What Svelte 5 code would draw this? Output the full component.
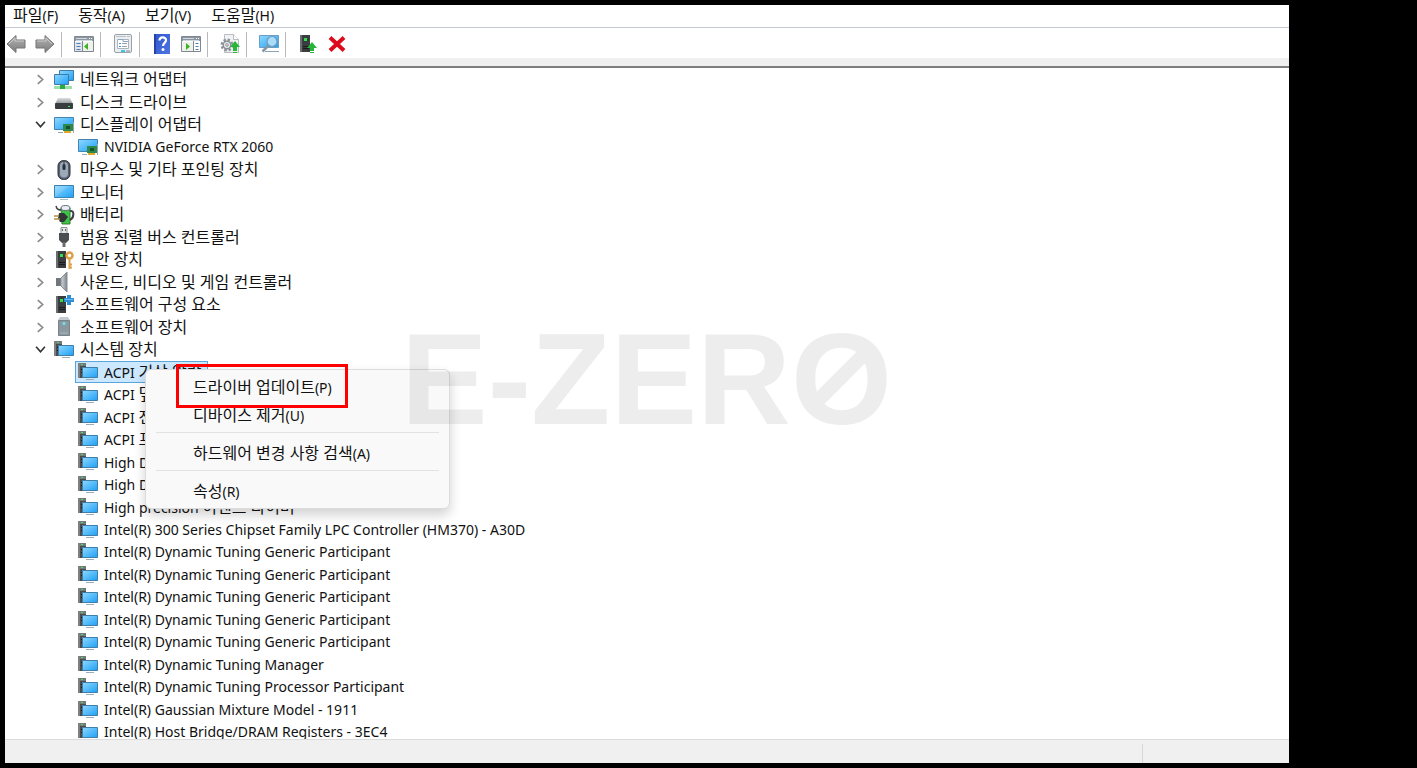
<script>
  let { onCommand = () => {} } = $props();

  const menus = ['파일(F)', '동작(A)', '보기(V)', '도움말(H)'];

  const tools = [
    { icon: 'back', label: '뒤로' },
    { icon: 'forward', label: '앞으로' },
    { sep: true },
    { icon: 'console', label: '콘솔 트리 표시' },
    { sep: true },
    { icon: 'props', label: '속성' },
    { sep: true },
    { icon: 'help', label: '도움말' },
    { icon: 'action', label: '작업 창 표시' },
    { sep: true },
    { icon: 'driver', label: '드라이버 업데이트' },
    { sep: true },
    { icon: 'scan', label: '하드웨어 변경 사항 검색' },
    { sep: true },
    { icon: 'enable', label: '디바이스 추가' },
    { icon: 'remove', label: '디바이스 제거' },
  ];

  let rows = $state([
    { icon: 'network', name: '네트워크 어댑터', open: false },
    { icon: 'disk', name: '디스크 드라이브', open: false },
    { icon: 'display', name: '디스플레이 어댑터', open: true },
    { icon: 'display', name: 'NVIDIA GeForce RTX 2060', child: true },
    { icon: 'mouse', name: '마우스 및 기타 포인팅 장치', open: false },
    { icon: 'monitor', name: '모니터', open: false },
    { icon: 'battery', name: '배터리', open: false },
    { icon: 'usb', name: '범용 직렬 버스 컨트롤러', open: false },
    { icon: 'security', name: '보안 장치', open: false },
    { icon: 'sound', name: '사운드, 비디오 및 게임 컨트롤러', open: false },
    { icon: 'component', name: '소프트웨어 구성 요소', open: false },
    { icon: 'software', name: '소프트웨어 장치', open: false },
    { icon: 'system', name: '시스템 장치', open: true },
    { icon: 'system', name: 'ACPI 기상 알람', child: true },
    { icon: 'system', name: 'ACPI 덮개', child: true },
    { icon: 'system', name: 'ACPI 전원 단추', child: true },
    { icon: 'system', name: 'ACPI 프로세서 수집기', child: true },
    { icon: 'system', name: 'High Definition Audio 컨트롤러', child: true },
    { icon: 'system', name: 'High Definition Audio 컨트롤러', child: true },
    { icon: 'system', name: 'High precision 이벤트 타이머', child: true },
    { icon: 'system', name: 'Intel(R) 300 Series Chipset Family LPC Controller (HM370) - A30D', child: true },
    { icon: 'system', name: 'Intel(R) Dynamic Tuning Generic Participant', child: true },
    { icon: 'system', name: 'Intel(R) Dynamic Tuning Generic Participant', child: true },
    { icon: 'system', name: 'Intel(R) Dynamic Tuning Generic Participant', child: true },
    { icon: 'system', name: 'Intel(R) Dynamic Tuning Generic Participant', child: true },
    { icon: 'system', name: 'Intel(R) Dynamic Tuning Generic Participant', child: true },
    { icon: 'system', name: 'Intel(R) Dynamic Tuning Manager', child: true },
    { icon: 'system', name: 'Intel(R) Dynamic Tuning Processor Participant', child: true },
    { icon: 'system', name: 'Intel(R) Gaussian Mixture Model - 1911', child: true },
    { icon: 'system', name: 'Intel(R) Host Bridge/DRAM Registers - 3EC4', child: true },
  ]);

  let selected = $state(13);

  const contextItems = [
    { name: '드라이버 업데이트(P)', marked: true },
    { name: '디바이스 제거(U)' },
    { sep: true },
    { name: '하드웨어 변경 사항 검색(A)' },
    { sep: true },
    { name: '속성(R)' },
  ];

  // hangul is set larger than latin, so split a label into runs
  const runs = (text) => text.split(/([가-힣][가-힣, ]*)/).filter(Boolean);
  const isHangul = (run) => /^[가-힣]/.test(run);
</script>

<!-- shared gradients -->
<svg class="defs" aria-hidden="true">
  <defs>
    <linearGradient id="screen" x1="0" y1="0" x2="1" y2="1">
      <stop offset="0" stop-color="#8ed8ff" />
      <stop offset="1" stop-color="#1ea0f5" />
    </linearGradient>
    <linearGradient id="steel" x1="0" y1="0" x2="1" y2="0">
      <stop offset="0" stop-color="#d5d9dd" />
      <stop offset="1" stop-color="#7d858c" />
    </linearGradient>
    <linearGradient id="arrow" x1="0" y1="0" x2="0" y2="1">
      <stop offset="0" stop-color="#b5b5b5" />
      <stop offset="1" stop-color="#7c7c7c" />
    </linearGradient>
    <linearGradient id="book" x1="0" y1="0" x2="1" y2="1">
      <stop offset="0" stop-color="#3158cc" />
      <stop offset="1" stop-color="#4c74e2" />
    </linearGradient>
    <linearGradient id="lid" x1="0" y1="0" x2="0" y2="1">
      <stop offset="0" stop-color="#dcdee0" />
      <stop offset="1" stop-color="#8f9397" />
    </linearGradient>
  </defs>
</svg>

{#snippet label(text)}
  <span class="label">{#each runs(text) as run}<span class:ko={isHangul(run)}>{run}</span>{/each}</span>
{/snippet}

{#snippet towerIcon()}
  <path d="M2 1h10v17H2z" fill="#3a3d40" />
  <path d="M2 1h2v17H2z" fill="#6a6e71" />
  <path d="M5 12.500h6M5 14.500h6" stroke="#1b1b1b" />
  <rect x="6" y="4" width="3" height="3" fill="#2fe04a" />
{/snippet}

{#snippet icon(name)}
  <svg class="icon" viewBox="0 0 20 20" aria-hidden="true">
    {#if name === 'back' || name === 'forward'}
      <path
        d={name === 'back' ? 'M1 10 10 1.500v4.500h9v8h-9v4.500z' : 'M19 10 10 1.500v4.500H1v8h9v4.500z'}
        fill="url(#arrow)" stroke="#747474" stroke-linejoin="round" />
      <path
        d={name === 'back' ? 'M3 10l6-6v3h9' : 'M17 10l-6-6v3H2'}
        fill="none" stroke="#c9c9c9" />
    {:else if name === 'console' || name === 'action'}
      <path d="M0.500 2.500h19v15h-19z" fill="#fff" stroke="#7f8790" />
      <path d="M1 3h18v4H1z" fill="#8c96a1" />
      <path d="M2 4.500h11M2 6.500h16" stroke="#cfd6dd" />
      <path d="M15 4h1v1h-1zM17 4h1v1h-1z" fill="#fff" />
      {#if name === 'console'}
        <path d="M1 8h7v9H1z" fill="#dfe5ea" />
        <path d="M8.500 7v10" stroke="#7f8790" />
        <path d="M2.500 9.500h4M2.500 12.500h4M2.500 15.500h4" stroke="#4b82bd" />
        <path d="M9 8h10v9H9z" fill="#eef2ea" />
        <path d="M14 9v7l-4-3.500z" fill="#38b423" />
      {:else}
        <path d="M1 8h11v9H1z" fill="#eef2ea" />
        <path d="M12.500 7v10" stroke="#7f8790" />
        <path d="M14.500 9.500h3M14.500 12.500h3M14.500 15.500h3" stroke="#4b82bd" />
        <path d="M5 9v7l4-3.500z" fill="#38b423" />
      {/if}
    {:else if name === 'props'}
      <rect x="1.500" y="0.500" width="17" height="18" rx="1.500" fill="#eceff1" stroke="#9aa0a6" />
      <path d="M3 2.500h10M14 2.500h3" stroke="#b8bfc5" />
      <path d="M4.500 5.500h11v9h-11z" fill="#fff" stroke="#aab4be" />
      <path d="M5 5.500h5v2h5" fill="none" stroke="#8da6bd" />
      <path d="M6 9.500h2M6 12.500h2" stroke="#3a98d0" />
      <path d="M9 9.500h5M9 12.500h5" stroke="#9ba3aa" />
      <path d="M8 16h4v2H8z" fill="#35c6e8" />
      <path d="M13 16h4v2h-4z" fill="#b4bac0" />
    {:else if name === 'help'}
      <path d="M2 0h16v20H2z" fill="url(#book)" />
      <path d="M2 0h2v20H2z" fill="#2642a4" />
      <path d="M7.500 6.500c0-4 6.500-4 6.500-.5 0 3-3 2.700-3 6" fill="none" stroke="#fff" stroke-width="2.200" />
      <circle cx="11" cy="15.500" r="1.500" fill="#fff" />
    {:else if name === 'driver'}
      <path d="M4.500 0.500h9l5 5v13h-14z" fill="#f1f2f3" stroke="#b9bdc1" />
      <path d="M13.500 0.500v5h5" fill="#fff" stroke="#b9bdc1" />
      <circle cx="7" cy="11" r="5.200" fill="none" stroke="#8b9197" stroke-width="2.500" stroke-dasharray="2.300 1.780" />
      <circle cx="7" cy="11" r="3.800" fill="#e9ebec" stroke="#8b9197" stroke-width="1.500" />
      <circle cx="7" cy="11" r="1.300" fill="#fff" stroke="#8b9197" />
      <path d="M15 7l5 6h-3v3h-4v-3h-3z" fill="#27b53a" />
      <path d="M13 16.500h4M13 18.500h4" stroke="#27b53a" />
    {:else if name === 'scan'}
      <path d="M0.500 1.500h19v12h-19z" fill="url(#screen)" stroke="#6b9fc3" />
      <path d="M6 17.500h14" stroke="#8ca4b5" />
      <circle cx="13" cy="7.500" r="5" fill="#a9dcfb" stroke="#6f9ab8" stroke-width="1.200" />
      <path d="M9.500 11.500L3.500 17.500" stroke="#8199a9" stroke-width="2.500" />
    {:else if name === 'enable'}
      {@render towerIcon()}
      <path d="M14 8l5 6h-3v2h-4v-2H9z" fill="#27b53a" />
      <path d="M12 16.500h4M12 18.500h4" stroke="#27b53a" />
    {:else if name === 'remove'}
      <path d="M3 3.500l14 13M17 3.500L3 16.500" stroke="#dc0c1e" stroke-width="4" />
    {:else if name === 'network'}
      <path d="M5.500 0.500h14v10h-14z" fill="url(#screen)" stroke="#3e7ca6" />
      <path d="M0.500 4.500h14v10h-14z" fill="url(#screen)" stroke="#3e7ca6" />
      <path d="M0 17.500h18" stroke="#9be0a5" stroke-width="3" />
      <path d="M6 15h5v4H6z" fill="#2ea843" />
    {:else if name === 'disk'}
      <path d="M4 6h12l3 6H1z" fill="url(#lid)" />
      <rect x="1" y="11" width="18" height="6" rx="1" fill="#3a3d40" />
      <path d="M14 14h2v1h-2z" fill="#3bea4d" />
    {:else if name === 'display'}
      <path d="M0.500 2.500h19v12h-19z" fill="url(#screen)" stroke="#4385b0" />
      <path d="M4 17.500h5" stroke="#93a8b6" />
      <path d="M9 9h10v7H9z" fill="#2c8a4c" />
      <path d="M12 11h4v3h-4z" fill="#1b4f31" />
      <path d="M19.500 7v11" stroke="#9fa6aa" />
      <path d="M10 16h7v2h-7z" fill="#e2a72d" />
    {:else if name === 'mouse'}
      <rect x="4" y="0.500" width="12" height="19" rx="5.500" fill="#566270" stroke="#2d3339" />
      <rect x="6" y="2" width="8" height="15.500" rx="4" fill="#9ba9b8" />
      <path d="M10 1v9" stroke="#3b434c" />
      <rect x="8.500" y="4" width="3" height="6" rx="1.500" fill="#2b3036" />
    {:else if name === 'monitor'}
      <path d="M0.500 3.500h19v12h-19z" fill="url(#screen)" stroke="#3c82af" />
      <path d="M1 15L15 4H1z" fill="#fff" opacity=".15" />
      <path d="M6 17.500h8" stroke="#a3bccb" />
    {:else if name === 'battery'}
      <path d="M2 1c1 4 3 4 6 4" fill="none" stroke="#444" stroke-width="1.500" />
      <path d="M7 3h9v16H8z" fill="#3fc145" stroke="#2f7a33" />
      <ellipse cx="11.500" cy="3" rx="4.500" ry="2.500" fill="#e8edf6" stroke="#616873" />
      <path d="M16 6c5-1 4 7 0 9" fill="none" stroke="#3d4144" stroke-width="2" />
      <path d="M5 8h5l4 4-4 5H6l-2-4z" fill="#333638" />
      <path d="M0 11h5M0 14h6" stroke="#b3903a" stroke-width="1.500" />
    {:else if name === 'usb'}
      <path d="M7 0.500h6v6H7z" fill="#e5e7e9" stroke="#909498" />
      <path d="M8.500 2v2M11.500 2v2" stroke="#666" />
      <path d="M5 6h10v7l-3 3H8l-3-3z" fill="#4b4e51" />
      <path d="M8.500 15h3v5h-3z" fill="#6a6d70" />
    {:else if name === 'security'}
      {@render towerIcon()}
      <circle cx="15.500" cy="5.500" r="3" fill="#fff" stroke="#dba24a" stroke-width="2.500" />
      <path d="M15.500 9v10M16 14.500h2M16 17.500h2" stroke="#dba24a" stroke-width="2" />
    {:else if name === 'sound'}
      <path d="M2 6h5v8H2z" fill="#70767b" />
      <path d="M7 6l6-6v20l-6-6z" fill="url(#steel)" stroke="#868d93" />
    {:else if name === 'component'}
      {@render towerIcon()}
      <path d="M10 3h3V0h4v3h3v4h-3v3h-4V7h-3z" fill="#2d8fd5" />
      <path d="M11 4.500h8" stroke="#74bced" />
    {:else if name === 'software'}
      <path d="M4 3l2-3h8l2 3z" fill="#c3cbd0" />
      <path d="M4.500 3.500h11v15h-11z" fill="#8c989f" stroke="#77838b" />
      <circle cx="10" cy="6.500" r="1.500" fill="#6ee4f3" />
      <path d="M6 16h8" stroke="#a9b3b9" />
    {:else if name === 'system'}
      <path d="M0 1h8v15H0z" fill="#4a4d50" />
      <path d="M0 1h2v15H0z" fill="#7c8083" />
      <path d="M2 1h6v3H2z" fill="#74787b" />
      <path d="M3 2h2v1H3z" fill="#45e05a" />
      <path d="M3 7.500h1M3 10.500h1" stroke="#1c1c1c" />
      <path d="M4.500 5.500h15v10h-15z" fill="url(#screen)" stroke="#3f7fa9" />
      <path d="M8 17.500h8" stroke="#9aaebb" />
    {/if}
  </svg>
{/snippet}

<div class="screen">
  <main class="window">
    <nav class="menubar">
      {#each menus as menu}
        <button>{@render label(menu)}</button>
      {/each}
    </nav>

    <div class="toolbar" role="toolbar" aria-label="도구 모음">
      {#each tools as tool}
        {#if tool.sep}
          <span class="divider"></span>
        {:else}
          <button aria-label={tool.label} onclick={() => onCommand(tool.icon)}>
            {@render icon(tool.icon)}
          </button>
        {/if}
      {/each}
    </div>

    <div class="content">
      <ul class="tree">
        {#each rows as row, i}
          <li class:child={row.child}>
            {#if !row.child}
              <button
                class="expander"
                class:open={row.open}
                aria-label={row.name}
                aria-expanded={row.open}
                onclick={() => (row.open = !row.open)}
              >
                <svg viewBox="0 0 10 10" aria-hidden="true">
                  <path d="M2.500 1 7 5 2.500 9" />
                </svg>
              </button>
            {/if}
            <button class="item" class:selected={i === selected} onclick={() => (selected = i)}>
              {@render icon(row.icon)}
              {@render label(row.name)}
            </button>
          </li>
        {/each}
      </ul>

      <div class="context" role="menu">
        {#each contextItems as item}
          {#if item.sep}
            <hr />
          {:else}
            <button role="menuitem" class:marked={item.marked} onclick={() => onCommand(item.name)}>
              {@render label(item.name)}
            </button>
          {/if}
        {/each}
      </div>

      <div class="watermark">E-ZER<span>O</span></div>
    </div>

    <footer class="status">
      <span></span>
    </footer>
  </main>
</div>

<style>
  :global(body) {
    background: #000;
  }

  .defs {
    position: absolute;
    width: 0;
    height: 0;
  }

  .screen {
    box-sizing: border-box;
    height: 100vh;
    padding: 5px 128px 5px 5px;
    color: #111;
    font-family: "Noto Sans", "Noto Sans CJK KR", sans-serif;
    font-size: 14px;
  }

  .window {
    display: flex;
    flex-direction: column;
    height: 100%;
    background: #fff;
  }

  button {
    padding: 0;
    border: 0;
    background: none;
    color: inherit;
    font: inherit;
    white-space: nowrap;
  }

  .label {
    white-space: pre;
  }

  .ko {
    font-size: 16px;
  }

  .icon {
    display: block;
    flex: none;
    width: 20px;
    height: 20px;
    overflow: visible;
  }

  .menubar {
    display: flex;
    gap: 20px;
    height: 22px;
    padding: 0 8px;
    border-bottom: 1px solid #c5c9d1;
    line-height: 18px;
  }

  .menubar button {
    height: 20px;
  }

  .toolbar {
    display: flex;
    align-items: center;
    gap: 7px;
    height: 28px;
    padding-top: 2px;
    border-bottom: 8px solid #f0f0f0;
  }

  .toolbar button {
    display: flex;
    justify-content: center;
    width: 22px;
  }

  .divider {
    width: 1px;
    height: 25px;
    margin: 0 4px 0 -2px;
    background: #b9b9b9;
  }

  .content {
    position: relative;
    flex: 1;
    min-height: 0;
    border-top: 2px solid #7e7e7e;
    overflow: hidden;
  }

  .tree {
    margin: 0;
    padding: 0;
    list-style: none;
  }

  .tree li {
    display: flex;
    align-items: center;
    height: 23px;
    padding-left: 26px;
  }

  .tree li:nth-child(even) {
    height: 22px;
  }

  .tree li.child {
    padding-left: 70px;
  }

  .expander {
    width: 18px;
    height: 18px;
    display: grid;
    place-items: center;
  }

  .expander svg {
    width: 11px;
    height: 11px;
    fill: none;
    stroke: #8a8a8a;
    stroke-width: 1.5;
  }

  .expander.open svg {
    transform: rotate(90deg);
    stroke: #333;
  }

  .item {
    display: flex;
    align-items: center;
    gap: 6px;
    box-sizing: border-box;
    height: 22px;
    padding: 0 6px 0 4px;
    border: 1px solid transparent;
    line-height: 20px;
  }

  .child .item {
    padding-left: 2px;
  }

  .item.selected {
    border-color: #5aa5dc;
    background: #cce8ff;
  }

  .context {
    position: absolute;
    top: 301px;
    left: 140px;
    box-sizing: border-box;
    width: 305px;
    padding: 3px 0;
    border: 1px solid #dcdcdc;
    border-radius: 6px;
    background: #f9f9f9;
    box-shadow: 0 6px 12px rgba(0, 0, 0, 0.18);
  }

  .context button {
    display: block;
    position: relative;
    width: 100%;
    height: 28px;
    padding-left: 47px;
    line-height: 28px;
    text-align: left;
  }

  /* red frame around the command to pick */
  .context .marked::after {
    content: "";
    position: absolute;
    top: -9px;
    left: 30px;
    box-sizing: border-box;
    width: 172px;
    height: 44px;
    border: 3px solid #f00;
  }

  .context .marked {
    z-index: 1;
  }

  .context hr {
    height: 1px;
    margin: 3px 10px 6px;
    border: 0;
    background: #e2e2e2;
  }

  .watermark {
    position: absolute;
    top: 236px;
    left: 396px;
    color: #000;
    font-family: "Liberation Sans", Arial, sans-serif;
    font-size: 130px;
    font-weight: bold;
    line-height: 150px;
    opacity: 0.067;
    pointer-events: none;
  }

  .watermark span {
    position: relative;
  }

  .watermark span::after {
    content: "";
    position: absolute;
    top: 50%;
    left: 15%;
    width: 70%;
    height: 14px;
    margin-top: -9px;
    background: #000;
    transform: rotate(-45deg);
  }

  .status {
    display: flex;
    justify-content: flex-end;
    height: 23px;
    border-top: 1px solid #dcdcdc;
    background: #f0f0f0;
  }

  .status span {
    width: 146px;
    margin-top: 4px;
    border-left: 1px solid #d8d8d8;
  }
</style>
